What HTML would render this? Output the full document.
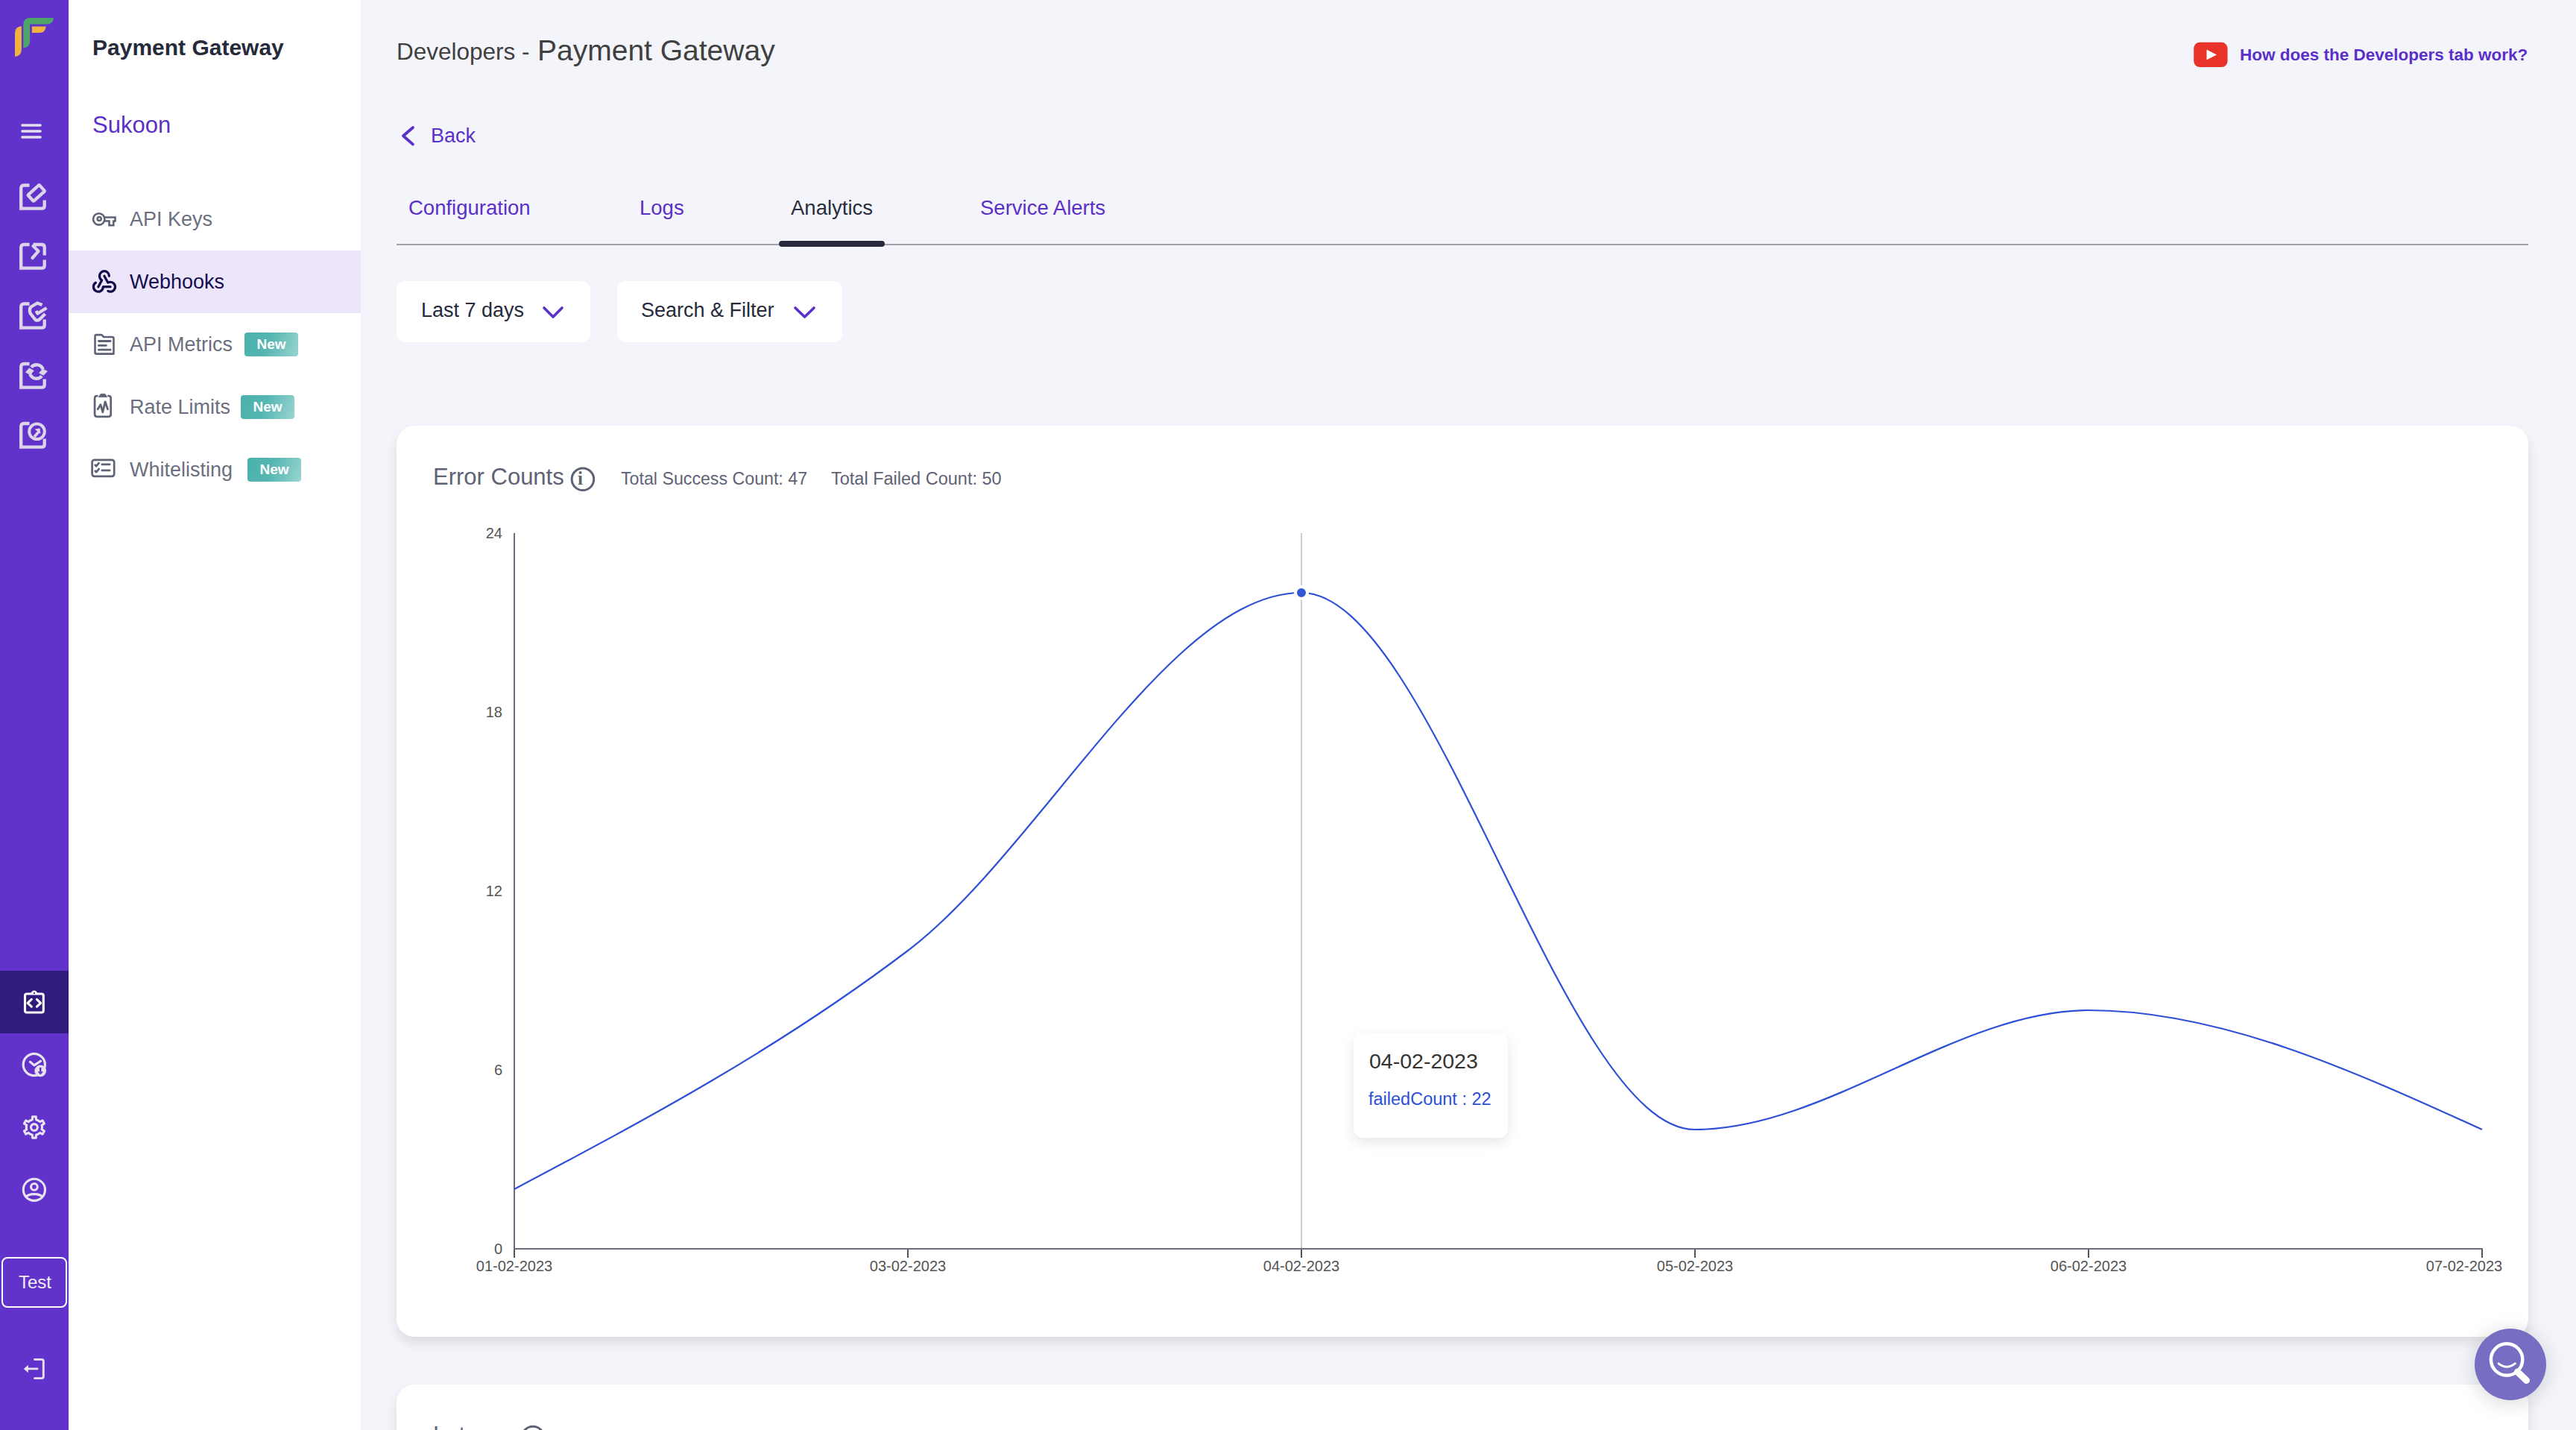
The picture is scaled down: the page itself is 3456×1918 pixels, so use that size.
<!DOCTYPE html>
<html><head><meta charset="utf-8">
<style>
html,body{margin:0;padding:0;}
html{overflow:hidden;width:3456px;height:1918px;background:#F4F5FA;}
body{width:3456px;height:1918px;overflow:hidden;background:#F4F5FA;position:relative;font-family:"Liberation Sans",sans-serif;}
.t{position:absolute;line-height:1;white-space:nowrap;}
.abs{position:absolute;}
#sb1{position:absolute;left:0;top:0;width:92px;height:1918px;background:#6233CB;}
#sb2{position:absolute;left:92px;top:0;width:392px;height:1918px;background:#FFFFFF;}
.menu{color:#6B6F80;font-size:27px;left:174px;}
.badge{position:absolute;width:72px;height:32px;border-radius:4px;background:linear-gradient(110deg,#4AB1AC 0%,#56B6B1 45%,#9AD5D1 100%);color:#fff;font-weight:bold;font-size:19px;line-height:32px;text-align:center;}
.tab{font-size:27.5px;top:265px;color:#5B2FC9;}
.dd{position:absolute;top:377px;height:82px;background:#fff;border-radius:12px;}
.card{position:absolute;left:532px;width:2860px;background:#fff;border-radius:24px;box-shadow:0 8px 16px rgba(0,0,0,0.10);}
.ytick{font-size:20px;color:#555;text-align:right;width:60px;left:614px;}
.xtick{font-size:20px;color:#555;text-align:center;width:200px;top:1688px;}
</style></head>
<body>
<div id="sb1"></div>
<div id="sb2"></div>
<div class="abs" style="left:0;top:1302px;width:92px;height:84px;background:#311C7E;"></div>
<div class="t" style="left:25px;top:1708px;font-size:24px;color:#F2EEF8;">Test</div>

<!-- sidebar 2 -->
<div class="t" style="left:124px;top:49px;font-size:30px;font-weight:bold;color:#262A3A;">Payment Gateway</div>
<div class="t" style="left:124px;top:152px;font-size:31px;color:#5B2FC9;">Sukoon</div>
<div class="abs" style="left:92px;top:336px;width:392px;height:84px;background:#EDE6FB;"></div>
<div class="t menu" style="top:281px;">API Keys</div>
<div class="t menu" style="top:365px;color:#140E4F;">Webhooks</div>
<div class="t menu" style="top:449px;">API Metrics</div>
<div class="badge" style="left:328px;top:446px;">New</div>
<div class="t menu" style="top:533px;">Rate Limits</div>
<div class="badge" style="left:323px;top:530px;">New</div>
<div class="t menu" style="top:617px;">Whitelisting</div>
<div class="badge" style="left:332px;top:614px;">New</div>

<!-- header -->
<div class="t" style="left:532px;top:54px;font-size:31.5px;color:#404040;">Developers -</div>
<div class="t" style="left:721px;top:48px;font-size:39px;color:#404040;">Payment Gateway</div>
<div class="t" style="left:578px;top:169px;font-size:27px;color:#5B2FC9;">Back</div>
<div class="t" style="left:3005px;top:63px;font-size:22.5px;font-weight:bold;color:#5B2FC9;">How does the Developers tab work?</div>

<!-- tabs -->
<div class="t tab" style="left:548px;">Configuration</div>
<div class="t tab" style="left:858px;">Logs</div>
<div class="t tab" style="left:1061px;color:#2A2D3E;">Analytics</div>
<div class="t tab" style="left:1315px;">Service Alerts</div>
<div class="abs" style="left:532px;top:327px;width:2860px;height:2px;background:#A2A1AA;"></div>
<div class="abs" style="left:1045px;top:323px;width:142px;height:8px;border-radius:4px;background:#282B3F;"></div>

<!-- dropdowns -->
<div class="dd" style="left:532px;width:260px;"></div>
<div class="t" style="left:565px;top:403px;font-size:27px;color:#262A3A;">Last 7 days</div>
<div class="dd" style="left:828px;width:302px;"></div>
<div class="t" style="left:860px;top:403px;font-size:27px;color:#262A3A;">Search &amp; Filter</div>

<!-- card -->
<div class="card" style="top:571px;height:1222px;"></div>
<div class="abs" style="left:480px;top:1820px;width:2976px;height:98px;overflow:hidden;"><div class="card" style="left:52px;top:37px;height:400px;"></div></div>
<div class="t" style="left:581px;top:624px;font-size:31px;color:#5E6275;">Error Counts</div>
<div class="t" style="left:833px;top:631px;font-size:23.2px;color:#5E6275;">Total Success Count: 47</div>
<div class="t" style="left:1115px;top:631px;font-size:23.5px;color:#5E6275;">Total Failed Count: 50</div>
<div class="t" style="left:581px;top:1909px;height:9px;overflow:hidden;font-size:31px;color:#5E6275;">Latency</div>

<!-- icons overlay -->
<svg class="abs" style="left:0;top:0;" width="3456" height="1918" viewBox="0 0 3456 1918">
<!-- logo -->
<path d="M28.9,35 L28.9,66 Q28.9,75 20,76 L20,44 Q20,36 28.9,35 Z" fill="#EFB33F"/>
<path d="M31.3,33 Q31.3,24 40.5,24 L72,24 Q71,32.5 63.5,32.5 L40.1,32.5 L40.1,55.5 Q40.1,63.5 31.3,64.5 Z" fill="#4EA66A"/>
<path d="M42.9,35.5 L61.7,35.5 Q60.5,44 53.5,44 L42.9,44 Z" fill="#EFB33F"/>
<!-- hamburger -->
<g stroke="#E4DFF0" stroke-width="3.6" stroke-linecap="round">
<line x1="30" y1="168" x2="54" y2="168"/><line x1="30" y1="176" x2="54" y2="176"/><line x1="30" y1="184" x2="54" y2="184"/>
</g>
<!-- frame icons -->
<g fill="none" stroke="#DCD5EA" stroke-width="4.3">
 <g transform="translate(20,235)">
  <path d="M19.5,13.5 H12 Q8.2,13.5 8.2,17.3 V44.7 H36 Q39.7,44.7 39.7,41 V33.5"/>
  <rect x="-10.2" y="-5.6" width="20.4" height="11.2" rx="1.2" transform="translate(48.75,258.95) translate(-20,-235) rotate(-42)"/>
 </g>
 <g transform="translate(20,315)">
  <path d="M19.5,13 H12 Q8.2,13 8.2,16.8 V44.7 H36 Q39.7,44.7 39.7,41 V33.5"/>
  <path d="M24.5,13 H36 Q39.7,13 39.7,16.8 V27.5"/>
  <path d="M24.5,15 L31.5,21.8 L23.5,31" stroke-linecap="round" stroke-linejoin="round"/>
 </g>
 <g transform="translate(20,395)">
  <path d="M19.5,12.5 H12 Q8.2,12.5 8.2,16.3 V44.7 H36 Q39.7,44.7 39.7,41 V33.5"/>
  <path d="M36.5,14 L30,11.5 L21,17 Q19,20 20.5,25 L27.5,34 Q30.5,35.5 33,33.5 L40.5,26" stroke-linejoin="round"/>
  <path d="M28.5,22 L30.5,25.5 L42.5,18" stroke-linejoin="round"/>
 </g>
 <g transform="translate(20,475)">
  <path d="M19.5,13 H12 Q8.2,13 8.2,16.8 V44.7 H36 Q39.7,44.7 39.7,41 V33.5"/>
  <path d="M21.95,17.59 A9.2,9.2 0 0 1 37.75,20.66"/>
  <path d="M36.05,29.41 A9.2,9.2 0 0 1 20.35,26.65"/>
 </g>
 <path d="M32.5,25.3 L37.2,20.2 L43.4,22.9 L38.4,28.3 Z M14.5,24.3 L19.3,18.8 L25.3,22.3 L20.6,27.6 Z" fill="#DCD5EA" stroke="#DCD5EA" stroke-width="0.8" stroke-linejoin="round" transform="translate(20,475)"/>
 <g transform="translate(20,555)">
  <path d="M19.5,13 H12 Q8.2,13 8.2,16.8 V44.7 H36 Q39.7,44.7 39.7,41 V33.5"/>
  <circle cx="29.5" cy="23.8" r="10.3" stroke-width="4"/>
  <path d="M26,31 L32,24" stroke-width="3.5"/>
  <path d="M26.5,20.5 L33.5,19.5 L34.5,27 Z" fill="#DCD5EA" stroke="none"/>
 </g>
</g>
<!-- active dark bg icon: clipboard code -->
<g fill="none" stroke="#FFFFFF" stroke-width="3.1" stroke-linejoin="round" stroke-linecap="round">
 <rect x="33.5" y="1333" width="24.8" height="25" rx="2.5"/>
 <path d="M42.3,1340.4 L37.1,1345.4 L42.3,1350.2 M49.4,1340.4 L54.6,1345.4 L49.4,1350.2"/>
</g>
<path d="M41.5,1333 A4.4,4.4 0 0 1 50.3,1333 Z" fill="#FFFFFF"/>
<circle cx="45.9" cy="1332.2" r="1.1" fill="#311C7E"/>
<!-- clock download -->
<g fill="none" stroke="#E6E2EE" stroke-width="3.2" stroke-linecap="round" stroke-linejoin="round">
 <circle cx="45.8" cy="1428" r="14.6"/>
 <path d="M40.4,1424.3 L45.9,1428.8 L54.6,1423.2"/>
</g>
<circle cx="54.2" cy="1436.4" r="7.8" fill="#E6E2EE"/>
<path d="M54.2,1431.8 V1437.5" stroke="#6233CB" stroke-width="2.4"/>
<path d="M50.5,1437.2 L58,1437.2 L54.2,1441.4 Z" fill="#6233CB"/>
<!-- gear -->
<g fill="none" stroke="#E6E2EE" stroke-width="3.1" stroke-linejoin="round">
<path d="M40.60,1502.82 L43.34,1501.71 L43.52,1497.80 L48.28,1497.80 L48.46,1501.71 L51.20,1502.82 L53.53,1504.64 L57.01,1502.84 L59.39,1506.96 L56.09,1509.08 L56.50,1512.00 L56.09,1514.92 L59.39,1517.04 L57.01,1521.16 L53.53,1519.36 L51.20,1521.18 L48.46,1522.29 L48.28,1526.20 L43.52,1526.20 L43.34,1522.29 L40.60,1521.18 L38.27,1519.36 L34.79,1521.16 L32.41,1517.04 L35.71,1514.92 L35.30,1512.00 L35.71,1509.08 L32.41,1506.96 L34.79,1502.84 L38.27,1504.64Z"/>
<circle cx="45.9" cy="1512" r="4.4"/>
</g>
<!-- user -->
<defs><clipPath id="ucl"><circle cx="45.9" cy="1595.8" r="15"/></clipPath></defs>
<g fill="none" stroke="#E6E2EE" stroke-width="3.1">
 <circle cx="45.9" cy="1595.8" r="14.6"/>
 <circle cx="45.9" cy="1591.9" r="4.35"/>
 <ellipse cx="45.9" cy="1606.2" rx="11" ry="4.6" clip-path="url(#ucl)"/>
</g>
<!-- test button -->
<rect x="3" y="1687" width="86" height="66" rx="7" fill="none" stroke="#FFFFFF" stroke-width="2"/>
<!-- logout -->
<g fill="none" stroke="#E6E2EE" stroke-width="2.9" stroke-linecap="round" stroke-linejoin="round">
 <path d="M46.5,1823.4 H56 Q58.3,1823.4 58.3,1825.7 V1846.3 Q58.3,1848.6 56,1848.6 H46.5"/>
 <path d="M37.5,1835.9 H50"/>
</g>
<path d="M31.8,1836 L37.9,1830.8 L37.9,1841.2 Z" fill="#E6E2EE"/>

<!-- submenu icons -->
<g fill="none" stroke="#5E6275" stroke-width="2.6" stroke-linejoin="miter">
 <circle cx="132.7" cy="293.9" r="7.7"/>
 <circle cx="133.2" cy="293.5" r="2.5"/>
 <path d="M140,291.5 H154.5 V296.5 H152.3 V302.2 H146.5 V296.5 H140.3"/>
</g>
<g fill="none" stroke="#120B4A" stroke-width="2" stroke-linecap="round" stroke-linejoin="round" transform="translate(120.57,357.26) scale(1.615)">
 <path d="M4.876 13.61a4 4 0 1 0 6.124 3.39h6"/>
 <path d="M15.066 20.502a4 4 0 1 0 1.934 -7.502c-.706 0 -1.424 .179 -2 .5l-3 -5.5" />
 <path d="M16 8a4 4 0 1 0 -8 0c0 1.506 .77 2.818 2 3.5l-3 5.5" />
</g>
<g fill="none" stroke="#5E6275" stroke-width="2.6" stroke-linecap="round" stroke-linejoin="round">
 <path d="M127.5,451 Q127.5,449.1 129.4,449.1 H136.5 L139.2,452 H150.6 Q152.5,452 152.5,453.9 V474.6 H129.4 Q127.5,474.6 127.5,472.7 Z"/>
 <path d="M132.4,457.5 H148.2 M132.4,463.4 H142.3 M132.4,469.2 H148.2" stroke-width="2.8"/>
</g>
<g fill="none" stroke="#5E6275" stroke-width="2.7" stroke-linecap="round" stroke-linejoin="round">
 <path d="M130.3,531 H130 Q127.1,531 127.1,534 V555.8 Q127.1,558.8 130,558.8 H145.8 Q148.7,558.8 148.7,555.8 V534 Q148.7,531 145.8,531 H145.4"/>
 <path d="M131.2,548.8 L134.9,542.6 L137.8,552.8 L141.1,538.8 L144.5,548.8" stroke-width="2.8"/>
</g>
<path d="M135.2,528.3 H140.9 L143.8,532.6 H132.2 Z" fill="#5E6275" stroke="#5E6275" stroke-width="0.8" stroke-linejoin="round"/>
<g fill="none" stroke="#5E6275" stroke-width="2.7" stroke-linecap="round" stroke-linejoin="round">
 <rect x="123.6" y="616.8" width="29.6" height="22" rx="3"/>
 <path d="M127.7,623.8 L129.2,625.2 L132.6,621.2 M127.7,631.8 L129.2,633.1 L132.6,629.1" stroke-width="2.8"/>
 <path d="M136.9,622.9 H147.1 M136.9,630.9 H147.1" stroke-width="2.8"/>
</g>

<!-- back chevron -->
<path d="M554,171 L541,182.3 L554,193.6" fill="none" stroke="#5B2FC9" stroke-width="3.8" stroke-linecap="round" stroke-linejoin="round"/>
<!-- dropdown chevrons -->
<path d="M730,413 L742,425 L754,413" fill="none" stroke="#5B2FC9" stroke-width="3.6" stroke-linecap="round" stroke-linejoin="round"/>
<path d="M1067,413 L1079.5,425 L1092,413" fill="none" stroke="#5B2FC9" stroke-width="3.6" stroke-linecap="round" stroke-linejoin="round"/>
<!-- youtube -->
<rect x="2943.2" y="56.8" width="45.3" height="33.2" rx="8" fill="#E8332A"/>
<path d="M2960.5,66.5 L2974,73.4 L2960.5,80.3 Z" fill="#FFFFFF"/>
<!-- info icon -->
<circle cx="781.9" cy="642.8" r="14.8" fill="none" stroke="#5E6275" stroke-width="3"/>
</svg>

<!-- chart -->
<svg class="abs" style="left:0;top:0;" width="3456" height="1918" viewBox="0 0 3456 1918">
<line x1="1746" y1="715" x2="1746" y2="1675" stroke="#CCCCCC" stroke-width="2"/>
<line x1="690" y1="715" x2="690" y2="1676" stroke="#6E6A7C" stroke-width="2"/>
<line x1="689" y1="1675" x2="3331" y2="1675" stroke="#6E6A7C" stroke-width="2"/>
<line x1="690" y1="1676" x2="690" y2="1687" stroke="#555" stroke-width="2"/>
<line x1="1218" y1="1676" x2="1218" y2="1687" stroke="#555" stroke-width="2"/>
<line x1="1746" y1="1676" x2="1746" y2="1687" stroke="#555" stroke-width="2"/>
<line x1="2274" y1="1676" x2="2274" y2="1687" stroke="#555" stroke-width="2"/>
<line x1="2802" y1="1676" x2="2802" y2="1687" stroke="#555" stroke-width="2"/>
<line x1="3330" y1="1676" x2="3330" y2="1687" stroke="#555" stroke-width="2"/>
<path d="M690.00,1595.00C866.00,1501.67,1042.00,1408.33,1218.00,1275.00C1394.00,1141.67,1570.00,795.00,1746.00,795.00C1922.00,795.00,2098.00,1515.00,2274.00,1515.00C2450.00,1515.00,2626.00,1355.00,2802.00,1355.00C2978.00,1355.00,3154.00,1435.00,3330.00,1515.00" fill="none" stroke="#2E50D8" stroke-width="2.2"/>
<circle cx="1746" cy="795" r="8" fill="#3557D6" stroke="#fff" stroke-width="4"/>
</svg>
<div class="t ytick" style="top:705.4px;">24</div>
<div class="t ytick" style="top:945.4px;">18</div>
<div class="t ytick" style="top:1185.4px;">12</div>
<div class="t ytick" style="top:1425.4px;">6</div>
<div class="t ytick" style="top:1665.4px;">0</div>
<div class="t xtick" style="left:590px;">01-02-2023</div>
<div class="t xtick" style="left:1118px;">03-02-2023</div>
<div class="t xtick" style="left:1646px;">04-02-2023</div>
<div class="t xtick" style="left:2174px;">05-02-2023</div>
<div class="t xtick" style="left:2702px;">06-02-2023</div>
<div class="t xtick" style="left:3206px;">07-02-2023</div>

<!-- tooltip -->
<div class="abs" style="left:1816px;top:1385px;width:207px;height:141px;background:#fff;border-radius:12px;box-shadow:0 6px 18px rgba(0,0,0,0.10);"></div>
<div class="t" style="left:1837px;top:1409px;font-size:28.5px;color:#333333;">04-02-2023</div>
<div class="t" style="left:1836px;top:1463px;font-size:23.5px;color:#2B4FD8;">failedCount : 22</div>
<!-- info i -->
<svg class="abs" style="left:690px;top:1900px;" width="60" height="18"><circle cx="25" cy="28" r="14.8" fill="none" stroke="#5E6275" stroke-width="3"/></svg>
<div class="t" style="left:775px;top:629px;font-size:25px;font-weight:bold;color:#5E6275;font-family:'Liberation Serif',serif;">i</div>
<!-- FAB -->
<div class="abs" style="left:3320px;top:1782px;width:96px;height:96px;border-radius:50%;background:#776DC2;box-shadow:0 4px 28px rgba(0,0,0,0.16);"></div>
<svg class="abs" style="left:3320px;top:1782px;" width="96" height="96" viewBox="0 0 96 96">
<circle cx="43.1" cy="41.5" r="21.2" fill="none" stroke="#fff" stroke-width="4.5"/>
<path d="M32,46.8 Q43,55.5 54.3,46.8" fill="none" stroke="#fff" stroke-width="2.9" stroke-linecap="round"/>
<path d="M57.5,58 L69.5,69.5" stroke="#fff" stroke-width="9" stroke-linecap="round"/>
</svg>

</body></html>
